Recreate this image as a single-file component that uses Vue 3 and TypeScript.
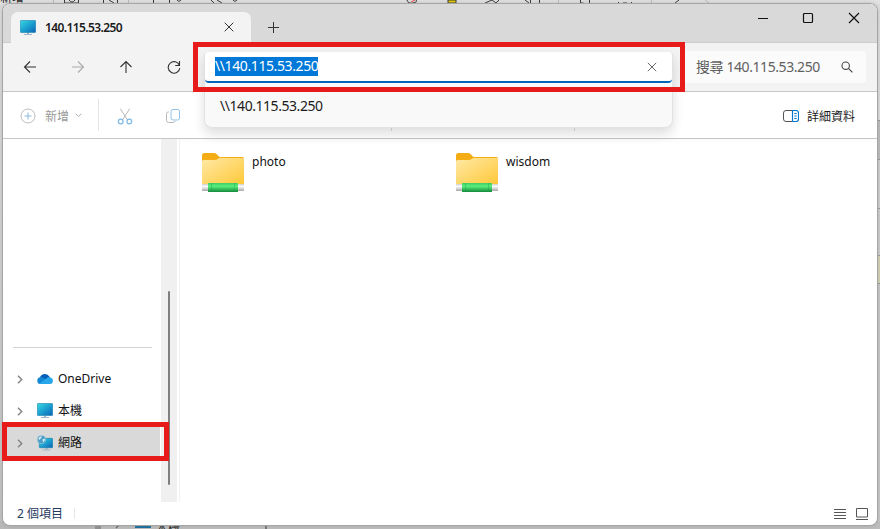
<script setup lang="ts">
import { ref } from 'vue'

interface Folder { name: string }
interface Place { label: string; icon: 'cloud' | 'pc' | 'network'; active?: boolean }

const host = '140.115.53.250'
const address = ref('\\\\' + host)
const folders: Folder[] = [{ name: 'photo' }, { name: 'wisdom' }]
const places: Place[] = [
  { label: 'OneDrive', icon: 'cloud' },
  { label: '本機', icon: 'pc' },
  { label: '網路', icon: 'network', active: true },
]
</script>

<template>
  <main class="desktop">
    <svg width="0" height="0" class="defs" aria-hidden="true">
      <defs>
        <linearGradient id="screen" x1="0" y1="0" x2="1" y2="1">
          <stop offset="0" stop-color="#3ad8e2" /><stop offset=".5" stop-color="#1ba0cf" /><stop offset="1" stop-color="#0c62b4" />
        </linearGradient>
        <linearGradient id="paper" x1="0" y1="0" x2="1" y2="1">
          <stop offset="0" stop-color="#ffe9a6" /><stop offset="1" stop-color="#ffc838" />
        </linearGradient>
        <linearGradient id="pipe" x1="0" y1="0" x2="0" y2="1">
          <stop offset="0" stop-color="#3fcb64" /><stop offset=".35" stop-color="#5af07e" /><stop offset="1" stop-color="#148a3c" />
        </linearGradient>
        <linearGradient id="cap" x1="0" y1="0" x2="0" y2="1">
          <stop offset="0" stop-color="#d0d0d0" /><stop offset=".35" stop-color="#fafafa" /><stop offset="1" stop-color="#a8a8a8" />
        </linearGradient>
        <symbol id="monitor" viewBox="0 0 16 16">
          <path d="M4 14h8v1H4zM7 12.500h2V14H7z" fill="#9db4c4" />
          <rect x=".3" y=".5" width="15.400" height="12" rx=".8" fill="url(#screen)" stroke="#1782ae" stroke-width=".6" />
        </symbol>
      </defs>
    </svg>

    <div class="behind-top">
      <span class="cut-text">新增</span>
      <svg width="880" height="4" viewBox="0 0 880 4" fill="none" stroke="#333">
        <path d="M64.500 0v3h14V0M69 0q3 4 6 0M103.500 0v3M109 0l5 3M117.500 0v3M153.500 0v3.500h4M169.500 0v3.500h-4M177 0l2 1.500 2-1.500M211 0l3 3M217 0l5 3M233 0l2 1.500 2-1.500M407 0q1 4 6 3t3-3M485 3l7-3M492 0l4 3 3-3M525 0l4 3M530.500 0v3M539.500 0v3M580.500 0v3h3M589.500 0v3M618.500 2v1.500M623 3h4M631.500 2v1.500M675 3l4-3" />
        <path d="M53.500 0v4M128.500 0v4M558.500 0v4M651.500 0v4M705 0l4 3" stroke="#bbb" />
        <path d="M411 2l4-2" stroke="#e44" /><path d="M448 0h8v3h-8z" fill="#efce00" />
      </svg>
    </div>
    <div class="behind-right"><i /><i /><i /><i /><i /></div>
    <div class="behind-bottom">
      <svg width="60" height="4" viewBox="0 0 60 4"><path d="M19 0l-3 3" stroke="#666" stroke-width="1.300" /><path d="M35 0h16v3H35z" fill="#126c9f" /></svg>
      <span>本機</span><i />
    </div>

    <section class="window">
      <header class="titlebar">
        <div class="tab">
          <svg class="pc" width="16" height="16"><use href="#monitor" /></svg>
          <b>{{ host }}</b>
          <svg class="tab-close" width="10" height="10" viewBox="0 0 10 10"><path d="M.7.7l8.600 8.600M9.300.7L.7 9.300" /></svg>
        </div>
        <svg class="plus" width="11" height="11" viewBox="0 0 11 11"><path d="M5.500 0v11M0 5.500h11" /></svg>
        <div class="controls">
          <svg width="10" height="12" viewBox="0 0 10 12"><path d="M0 6.500h10" /></svg>
          <svg width="12" height="12" viewBox="0 0 12 12"><rect x="1.500" y="1.500" width="9" height="9" rx="1" /></svg>
          <svg width="12" height="12" viewBox="0 0 12 12"><path d="M1 1l10 10M11 1L1 11" /></svg>
        </div>
      </header>

      <nav class="navbar">
        <div class="arrows">
          <svg width="14" height="14" viewBox="0 0 14 14"><path d="M13 7H1.500M7 1.500L1.500 7 7 12.500" /></svg>
          <svg class="off" width="14" height="14" viewBox="0 0 14 14"><path d="M1 7h11.500M7 1.500L12.500 7 7 12.500" /></svg>
          <svg width="14" height="14" viewBox="0 0 14 14"><path d="M7 13V1.500M1.500 7L7 1.500 12.500 7" /></svg>
          <svg width="14" height="14" viewBox="0 0 14 14"><path d="M12.500 5.500A5.800 5.800 0 1 0 12.800 8M12.500 1v4.500H8.200" /></svg>
        </div>
        <div class="address">
          <div class="field">
            <span class="selected">{{ address }}</span>
            <svg width="10" height="10" viewBox="0 0 10 10"><path d="M.8.8l8.400 8.400M9.200.8L.8 9.200" /></svg>
          </div>
          <div class="suggest">{{ address }}</div>
        </div>
        <div class="search">
          <span>搜尋 {{ host }}</span>
          <svg width="12" height="12" viewBox="0 0 12 12"><circle cx="4.700" cy="4.700" r="3.700" /><path d="M7.400 7.400l4 4" /></svg>
        </div>
      </nav>

      <div class="commands">
        <div class="new">
          <svg width="16" height="16" viewBox="0 0 16 16"><circle cx="8" cy="8" r="7" stroke="#bcbcbc" /><path d="M8 4.500v7M4.500 8h7" stroke="#88b9df" /></svg>
          <span>新增</span>
          <svg width="7" height="5" viewBox="0 0 7 5"><path d="M.7.8l2.800 2.800L6.300.8" stroke="#aaa" /></svg>
        </div>
        <svg class="cut" width="16" height="17" viewBox="0 0 16 17">
          <path d="M3.300.7l7.200 11.200M12.700.7L5.500 11.900" stroke="#b8b8b8" />
          <circle cx="3.700" cy="13.500" r="2.400" stroke="#7fb9e6" stroke-width="1.200" /><circle cx="12.300" cy="13.500" r="2.400" stroke="#7fb9e6" stroke-width="1.200" />
        </svg>
        <svg class="copy" width="16" height="16" viewBox="0 0 16 16">
          <path d="M4 4H3.200Q1.500 4 1.500 5.700v6.600q0 2.200 2.200 2.200h4.600q1.500 0 1.700-1.500" stroke="#b8b8b8" />
          <rect x="6" y="1.500" width="8.500" height="10.500" rx="2" stroke="#8fc1e8" />
        </svg>
        <i class="sep one" /><i class="sep two" />
        <div class="details">
          <svg width="16" height="12" viewBox="0 0 16 12"><path d="M9.500.5H3Q.5.5.5 3v6Q.5 11.500 3 11.500h6.500" stroke="#555" /><path d="M9.500.5H13q2.500 0 2.500 2.500v6q0 2.500-2.500 2.500H9.500zM11.300 3.500h2.400M11.300 6h2.400M11.300 8.500h2.400" stroke="#0878cf" stroke-width="1.150" /></svg>
          <span>詳細資料</span>
        </div>
      </div>

      <div class="body">
        <aside>
          <div class="tree">
            <hr />
            <div v-for="place in places" :key="place.label" class="place" :class="{ active: place.active }">
              <svg class="chev" width="6" height="9" viewBox="0 0 6 9"><path d="M1 .8l3.700 3.700L1 8.200" /></svg>
              <svg v-if="place.icon === 'cloud'" class="pi" width="16" height="16" viewBox="0 0 16 16">
                <path d="M2.800 7A5.200 5.200 0 0 1 12.500 5.800L14 9 8 11z" fill="#075eb8" />
                <path d="M.3 9.200Q.5 6.300 3.500 6.200q2-.1 4 1.300l4 5.500H3Q.2 12.700.3 9.200" fill="#1386d6" />
                <path d="M2 12.700L11 6.300q4.800-.4 4.900 3.500-.1 3.200-3 3.200H3q-.6 0-1-.3" fill="#28a8ea" />
              </svg>
              <svg v-else-if="place.icon === 'pc'" class="pi" width="16" height="16"><use href="#monitor" /></svg>
              <svg v-else class="pi" width="16" height="16" viewBox="0 0 16 16">
                <path d="M5.500 14.500h8v1h-8zM8.500 12.500h2v2h-2z" fill="#a7b6c1" />
                <rect x="2.300" y="3.300" width="13.400" height="9.400" rx=".7" fill="url(#screen)" stroke="#1682ad" stroke-width=".6" />
                <circle cx="4.500" cy="4.500" r="4.100" fill="#4b9dc7" stroke="#a9cbdc" stroke-width=".6" />
                <path d="M1.300 3.500Q3 .8 5 1.200L3.800 3.500 2.300 5zM5.300 4.500l2.500-1q.7 2-1.500 3.700z" fill="#d8edf4" />
              </svg>
              <span>{{ place.label }}</span>
            </div>
          </div>
          <div class="scroll"><i /></div>
        </aside>
        <div class="files">
          <article v-for="folder in folders" :key="folder.name">
            <svg width="42" height="40" viewBox="0 0 42 40">
              <path d="M0 11V2.500Q0 0 2.500 0H12q1.500 0 2.500 1l3 3H40.500Q42 4 42 5.500V11z" fill="#f5ad15" />
              <path d="M0 8.500Q0 7 1.500 7H13q1.300 0 2.300-.8l1-.6q.7-.5 2-.5H42V31H0z" fill="url(#paper)" />
              <rect x="0" y="31" width="42" height="7" fill="url(#cap)" />
              <rect x="6" y="30" width="30" height="9" fill="url(#pipe)" />
              <path d="M9.500 30v9M32.500 30v9" stroke="#1c994b" stroke-opacity=".35" />
            </svg>
            <span>{{ folder.name }}</span>
          </article>
        </div>
      </div>

      <footer>
        <span>{{ folders.length }} 個項目</span><i />
        <svg width="12" height="12" viewBox="0 0 12 12"><path d="M0 1.500h12M0 4.500h12M0 7.500h12M0 10.500h12" /></svg>
        <svg width="12" height="12" viewBox="0 0 12 12"><path d="M.5.5h11v8.500H.5zM0 11.500h12" /></svg>
      </footer>
    </section>

    <div class="mark mark-address" />
    <div class="mark mark-network" />
  </main>
</template>

<style>
body { margin: 0; overflow: hidden; }
</style>

<style scoped>
* { box-sizing: border-box; }
.desktop {
  position: relative; width: 880px; height: 529px; overflow: hidden; padding: 3px 2px;
  background: linear-gradient(#dedede, #d2d2d2 50%, #c3c3c3);
  font: 12px/16px "Noto Sans", "Noto Sans CJK TC", sans-serif; color: #1b1b1b;
}
svg { flex: none; display: block; fill: none; }
.defs { position: absolute; }
.behind-top { position: absolute; left: 0; top: 0; width: 880px; height: 4px; overflow: hidden; background: #e2e2e2; }
.behind-top svg { position: absolute; left: 0; top: 0; }
.cut-text { position: absolute; left: 0; top: -10px; font-size: 12px; line-height: 16px; color: #222; }
.behind-right { position: absolute; right: 0; top: 24px; width: 6px; height: 505px; display: flex; flex-direction: column; background: #c8c8c8; }
.behind-right i { border-bottom: 1px solid #999; }
.behind-right i:nth-child(1) { height: 97px; background: #dedede; }
.behind-right i:nth-child(2) { height: 39px; background: #bcbcbc; }
.behind-right i:nth-child(3) { height: 49px; background: #d0d0d0; }
.behind-right i:nth-child(4) { height: 47px; background: #cecece; }
.behind-right i:nth-child(5) { height: 28px; background: #d5d3b3; }
.behind-bottom {
  position: absolute; left: 0; bottom: 0; width: 880px; height: 8px; display: flex; align-items: flex-end; overflow: hidden;
  padding-left: 100px; background: linear-gradient(90deg, #b9b9b9 95px, #929292 95px, #929292 101px, #bebebe 101px);
}
.behind-bottom span { align-self: flex-start; margin: 0 0 0 -4px; line-height: 16px; color: #222; }
.behind-bottom i { width: 2px; height: 8px; margin-left: 85px; background: #777; }

.window {
  position: relative; width: 876px; height: 523px; border: 1px solid #a5a5a5; border-radius: 8px; overflow: hidden;
  display: grid; grid-template-rows: 39px 49px 47px 363px 23px; background: #fff; box-shadow: 0 0 4px #8886;
}
.titlebar { display: flex; background: #d9d9d9; box-shadow: inset 0 -1px #cdcdcd; }
.tab {
  display: flex; align-items: center; width: 240px; height: 31px; margin: 8px 0 0 8px; padding: 0 17px 0 9px;
  background: #f3f3f3; border-radius: 7px 7px 0 0;
}
.tab b { margin-left: 9px; font-size: 12px; font-weight: 600; letter-spacing: -.6px; }
.tab-close { margin: -1px 0 0 auto; stroke: #333; }
.plus { margin: 18px 0 0 17px; stroke: #333; }
.controls { display: flex; gap: 34px; margin: 8px 17px 0 auto; stroke: #111; stroke-width: 1.2; }
.navbar { position: relative; display: flex; background: #f3f3f3; border-bottom: 1px solid #c6c6c6; }
.arrows { display: flex; gap: 34px; align-items: center; width: 201px; padding-left: 20px; stroke: #333; stroke-width: 1.1; }
.off { stroke: #aaa; }
.address {
  position: relative; z-index: 2; width: 469px; height: 77px; margin-top: 8px; border-radius: 5px 5px 8px 8px;
  background: #f9f9f9; border: 1px solid #e2e2e2; border-top-color: #eee; box-shadow: 0 6px 12px #0002;
}
.field {
  display: flex; align-items: center; height: 31px; padding: 0 15px 0 10px; margin-bottom: 2px; background: #fff;
  border-bottom: 2px solid #0067b8; border-radius: 4px; font-size: 14px; letter-spacing: -.4px;
}
.selected { height: 19px; line-height: 18px; background: #0078d7; color: #fff; }
.field svg { margin-left: auto; stroke: #666; }
.suggest { padding-left: 15px; font-size: 14px; line-height: 41px; letter-spacing: -.45px; }
.search {
  display: flex; align-items: center; justify-content: space-between; width: 182px; height: 32px; margin: 8px 11px 0 auto; padding: 0 13px 0 12px;
  background: #fbfbfb; border-radius: 4px; color: #606060; font-size: 14px; letter-spacing: -.42px; stroke: #444;
}
.search span { stroke: none; }
.search svg { stroke-width: 1.1; }
.commands { display: flex; align-items: center; padding-right: 22px; border-bottom: 1px solid #c6c6c6; background: #fff; }
.new { display: flex; align-items: center; width: 96px; height: 32px; padding-left: 17px; border-right: 1px solid #e5e5e5; color: #989898; }
.new span { margin: 3px 6px 0 9px; }
.new svg { margin-top: 1px; }
.cut { margin: 2px 0 0 18px; }
.copy { margin: 2px 0 0 32px; }
.sep { width: 1px; height: 32px; background: #ddd; }
.one { margin-left: 210px; }
.two { margin-left: 182px; }
.details { display: flex; align-items: center; gap: 8px; margin: 2px 0 0 auto; }
.details span { padding-top: 2px; }
.body { display: grid; grid-template-columns: 177px 1fr; }
aside { display: grid; grid-template-columns: 158px 16px; border-right: 1px solid #f2f2f2; }
.tree { padding-top: 208px; }
hr { width: 139px; height: 1px; margin: 0 0 15px 10px; border: 0; background: #d2d2d2; }
.place { display: flex; align-items: center; width: 157px; height: 32px; padding-left: 14px; color: #111; }
.active { background: #d9d9d9; }
.chev { stroke: #858585; stroke-width: 1.5; margin-top: 1px; }
.pi { margin: 0 5px 0 14px; }
.scroll { padding: 152px 6px 0 7px; background: #f0f0f0; }
.scroll i { display: block; width: 2px; height: 194px; border-radius: 1px; background: #808080; }
.files { display: grid; grid-template-columns: 254px 254px; align-content: start; padding: 14px 0 0 22px; background: linear-gradient(#fbfbfb, #fff 5px); }
.files article { display: flex; gap: 8px; color: #111; }
.files span { padding-top: 1px; }
footer { display: flex; align-items: center; padding: 0 9px 0 14px; color: #243a5e; }
footer i { width: 1px; height: 11px; margin: 0 auto 0 11px; background: #e5e5e5; }
footer svg { margin-left: 10px; stroke: #555; }
.mark { position: absolute; border: 5px solid #e81b1b; z-index: 5; }
.mark-address { left: 193px; top: 42px; width: 492px; height: 50px; }
.mark-network { left: 2px; top: 422px; width: 167px; height: 39px; }
</style>
